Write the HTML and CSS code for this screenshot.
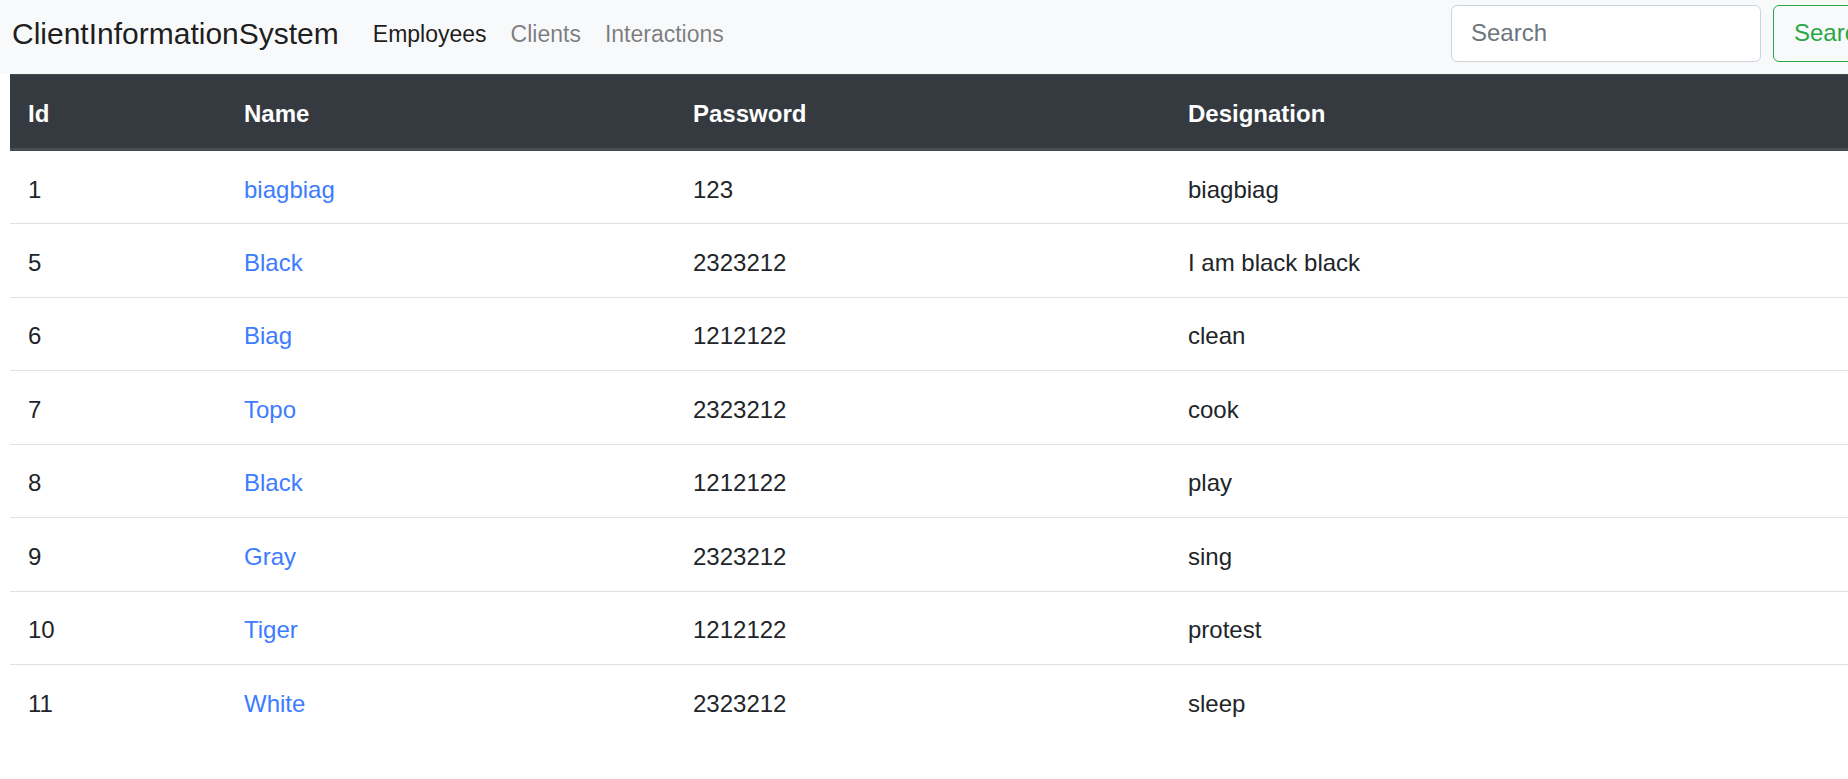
FILE: index.html
```html
<!DOCTYPE html>
<html lang="en">
<head>
<meta charset="utf-8">
<title>ClientInformationSystem</title>
<link rel="stylesheet" href="styles.css">
</head>
<body>
<div class="page">
  <nav class="navbar">
    <div class="navbar-row">
      <a class="brand" href="#">ClientInformationSystem</a>
      <ul class="nav">
        <li><a class="nav-link active" href="#">Employees</a></li>
        <li><a class="nav-link" href="#">Clients</a></li>
        <li><a class="nav-link" href="#">Interactions</a></li>
      </ul>
      <form class="search-form">
        <input class="search-input" type="search" placeholder="Search">
        <button class="search-btn" type="button">Search</button>
      </form>
    </div>
  </nav>
  <table class="table">
    <colgroup>
      <col class="col-id">
      <col class="col-name">
      <col class="col-pass">
      <col>
    </colgroup>
    <thead>
      <tr><th>Id</th><th>Name</th><th>Password</th><th>Designation</th></tr>
    </thead>
    <tbody>
      <tr><td>1</td><td><a href="#">biagbiag</a></td><td>123</td><td>biagbiag</td></tr>
      <tr><td>5</td><td><a href="#">Black</a></td><td>2323212</td><td>I am black black</td></tr>
      <tr><td>6</td><td><a href="#">Biag</a></td><td>1212122</td><td>clean</td></tr>
      <tr><td>7</td><td><a href="#">Topo</a></td><td>2323212</td><td>cook</td></tr>
      <tr><td>8</td><td><a href="#">Black</a></td><td>1212122</td><td>play</td></tr>
      <tr><td>9</td><td><a href="#">Gray</a></td><td>2323212</td><td>sing</td></tr>
      <tr><td>10</td><td><a href="#">Tiger</a></td><td>1212122</td><td>protest</td></tr>
      <tr><td>11</td><td><a href="#">White</a></td><td>2323212</td><td>sleep</td></tr>
    </tbody>
  </table>
</div>
</body>
</html>
```
FILE: styles.css
```css
html, body {
  margin: 0;
  padding: 0;
  overflow: hidden;
  background: #fff;
}
body {
  font-family: "Liberation Sans", Arial, sans-serif;
  color: #212529;
  font-size: 24px;
  line-height: 36px;
}
.page {
  width: 1920px;
}
.navbar {
  background: #f8f9fa;
  height: 74px;
  padding: 0 24px 0 12px;
  box-sizing: border-box;
}
.navbar-row {
  height: 66px;
  display: flex;
  align-items: center;
}
.brand {
  font-size: 30px;
  line-height: 45px;
  color: rgba(0, 0, 0, 0.9);
  text-decoration: none;
  margin-right: 22px;
}
.nav {
  list-style: none;
  margin: 0;
  padding: 0;
  display: flex;
}
.nav-link {
  display: block;
  padding: 1px 12px 0;
  color: rgba(0, 0, 0, 0.5);
  text-decoration: none;
  font-size: 23px;
  line-height: 36px;
}
.nav-link.active {
  color: rgba(0, 0, 0, 0.9);
}
.search-form {
  margin-left: auto;
  display: flex;
  align-items: center;
  gap: 12px;
  margin-right: 5px;
}
.search-input {
  width: 310px;
  height: 57px;
  box-sizing: border-box;
  border: 1px solid #ced4da;
  border-radius: 6px;
  background: #fff;
  padding: 9px 19px;
  font-family: inherit;
  font-size: 24px;
  color: #495057;
  outline: none;
}
.search-input::placeholder {
  color: #6c757d;
}
.search-btn {
  height: 57px;
  box-sizing: border-box;
  border: 1px solid #28a745;
  border-radius: 6px;
  background: transparent;
  color: #28a745;
  padding: 9px 20px;
  font-family: inherit;
  font-size: 24px;
  line-height: 36px;
}
.table {
  margin-left: 10px;
  width: 1900px;
  table-layout: fixed;
  border-collapse: separate;
  border-spacing: 0;
}
.col-id { width: 216px; }
.col-name { width: 449px; }
.col-pass { width: 495px; }
.table th {
  background: #343a40;
  color: #fff;
  font-weight: bold;
  text-align: left;
  padding: 21px 18px 16px;
  border-top: 1px solid #454d55;
  border-bottom: 3px solid #454d55;
}
.table td {
  padding: 20.5px 18px 16px;
  border-top: 1px solid #dee2e6;
  text-align: left;
  vertical-align: top;
}
.table tbody tr:first-child td {
  border-top: 0;
  padding-bottom: 15.5px;
}
.table a {
  color: #3d7cff;
  text-decoration: none;
}
```
